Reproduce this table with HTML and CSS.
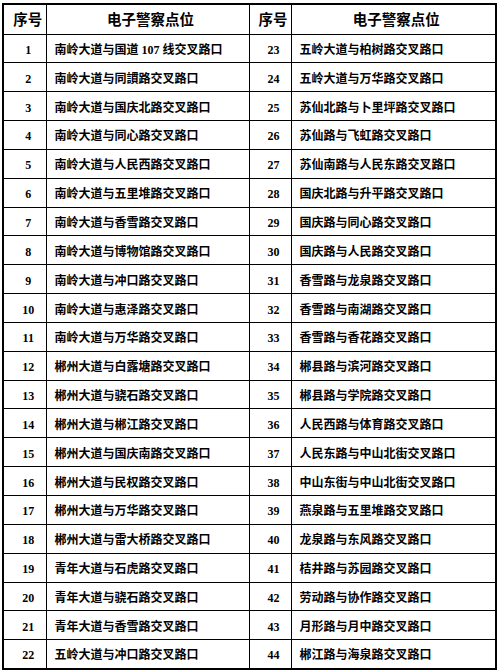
FILE: index.html
```html
<!DOCTYPE html>
<html lang="zh-CN">
<head>
<meta charset="utf-8">
<title>电子警察点位</title>
<link rel="stylesheet" href="styles.css">
</head>
<body>
<table class="sheet">
  <colgroup>
    <col class="c-no"><col class="c-name"><col class="c-no2"><col class="c-name2">
  </colgroup>
  <thead>
    <tr><th class="no">序号</th><th class="name">电子警察点位</th><th class="no">序号</th><th class="name">电子警察点位</th></tr>
  </thead>
  <tbody>
    <tr><td class="no">1</td><td class="name">南岭大道与国道 107 线交叉路口</td><td class="no">23</td><td class="name">五岭大道与柏树路交叉路口</td></tr>
    <tr><td class="no">2</td><td class="name">南岭大道与同謴路交叉路口</td><td class="no">24</td><td class="name">五岭大道与万华路交叉路口</td></tr>
    <tr><td class="no">3</td><td class="name">南岭大道与国庆北路交叉路口</td><td class="no">25</td><td class="name">苏仙北路与卜里坪路交叉路口</td></tr>
    <tr><td class="no">4</td><td class="name">南岭大道与同心路交叉路口</td><td class="no">26</td><td class="name">苏仙路与飞虹路交叉路口</td></tr>
    <tr><td class="no">5</td><td class="name">南岭大道与人民西路交叉路口</td><td class="no">27</td><td class="name">苏仙南路与人民东路交叉路口</td></tr>
    <tr><td class="no">6</td><td class="name">南岭大道与五里堆路交叉路口</td><td class="no">28</td><td class="name">国庆北路与升平路交叉路口</td></tr>
    <tr><td class="no">7</td><td class="name">南岭大道与香雪路交叉路口</td><td class="no">29</td><td class="name">国庆路与同心路交叉路口</td></tr>
    <tr><td class="no">8</td><td class="name">南岭大道与博物馆路交叉路口</td><td class="no">30</td><td class="name">国庆路与人民路交叉路口</td></tr>
    <tr><td class="no">9</td><td class="name">南岭大道与冲口路交叉路口</td><td class="no">31</td><td class="name">香雪路与龙泉路交叉路口</td></tr>
    <tr><td class="no">10</td><td class="name">南岭大道与惠泽路交叉路口</td><td class="no">32</td><td class="name">香雪路与南湖路交叉路口</td></tr>
    <tr><td class="no">11</td><td class="name">南岭大道与万华路交叉路口</td><td class="no">33</td><td class="name">香雪路与香花路交叉路口</td></tr>
    <tr><td class="no">12</td><td class="name">郴州大道与白露塘路交叉路口</td><td class="no">34</td><td class="name">郴县路与滨河路交叉路口</td></tr>
    <tr><td class="no">13</td><td class="name">郴州大道与骁石路交叉路口</td><td class="no">35</td><td class="name">郴县路与学院路交叉路口</td></tr>
    <tr><td class="no">14</td><td class="name">郴州大道与郴江路交叉路口</td><td class="no">36</td><td class="name">人民西路与体育路交叉路口</td></tr>
    <tr><td class="no">15</td><td class="name">郴州大道与国庆南路交叉路口</td><td class="no">37</td><td class="name">人民东路与中山北街交叉路口</td></tr>
    <tr><td class="no">16</td><td class="name">郴州大道与民权路交叉路口</td><td class="no">38</td><td class="name">中山东街与中山北街交叉路口</td></tr>
    <tr><td class="no">17</td><td class="name">郴州大道与万华路交叉路口</td><td class="no">39</td><td class="name">燕泉路与五里堆路交叉路口</td></tr>
    <tr><td class="no">18</td><td class="name">郴州大道与雷大桥路交叉路口</td><td class="no">40</td><td class="name">龙泉路与东风路交叉路口</td></tr>
    <tr><td class="no">19</td><td class="name">青年大道与石虎路交叉路口</td><td class="no">41</td><td class="name">桔井路与苏园路交叉路口</td></tr>
    <tr><td class="no">20</td><td class="name">青年大道与骁石路交叉路口</td><td class="no">42</td><td class="name">劳动路与协作路交叉路口</td></tr>
    <tr><td class="no">21</td><td class="name">青年大道与香雪路交叉路口</td><td class="no">43</td><td class="name">月形路与月中路交叉路口</td></tr>
    <tr><td class="no">22</td><td class="name">五岭大道与冲口路交叉路口</td><td class="no">44</td><td class="name">郴江路与海泉路交叉路口</td></tr>
  </tbody>
</table>
</body>
</html>
```
FILE: styles.css
```css
html, body {
  margin: 0;
  padding: 0;
  background: #fff;
}
body {
  padding: 3px 0 0 2px;
  font-family: "Liberation Serif", "Noto Sans CJK SC", serif;
  color: #000;
}
.sheet {
  border-collapse: collapse;
  table-layout: fixed;
  width: 493px;
  border: 2px solid #000;
}
.c-no { width: 43px; }
.c-name { width: 203px; }
.c-no2 { width: 42px; }
.c-name2 { width: 205px; }
.sheet thead tr { height: 30px; }
.sheet tbody tr { height: 28.85px; }
.sheet th,
.sheet td {
  border: 1.5px solid #000;
  padding: 0;
  font-weight: bold;
  white-space: nowrap;
  vertical-align: middle;
}
.sheet th {
  font-family: "Noto Sans CJK SC", sans-serif;
  font-size: 14.5px;
  line-height: 18px;
  text-align: center;
  padding-left: 6px;
}
.sheet td.no {
  text-align: center;
  font-size: 12px;
  line-height: 16px;
  padding: 3px 0 0 7px;
}
.sheet td.name {
  text-align: left;
  font-size: 12px;
  line-height: 16px;
  padding: 3px 0 0 8px;
}
```
